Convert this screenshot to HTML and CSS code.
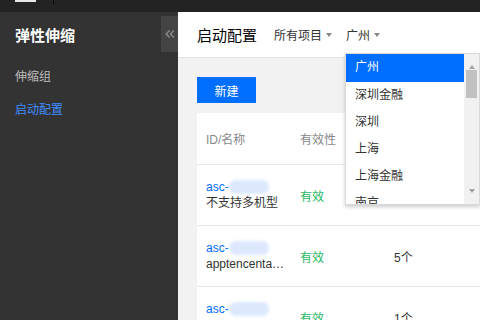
FILE: index.html
```html
<!DOCTYPE html>
<html lang="zh-CN">
<head>
    <meta charset="UTF-8">
    <meta name="viewport" content="width=device-width, initial-scale=1.0">
    <title>启动配置 - 弹性伸缩</title>
    <link rel="stylesheet" href="styles.css">
</head>

<body>
    <div class="as-topbar">
        <span class="as-logo"></span>
        <span class="as-divider"></span>
    </div>

    <div class="as-layout">
        <!-- Sidebar -->
        <aside class="as-sidebar">
            <div class="as-sidebar-title">弹性伸缩</div>
            <a class="as-nav-item">伸缩组</a>
            <a class="as-nav-item as-active">启动配置</a>
            <span class="as-collapse">
                <svg width="10" height="8" viewBox="0 0 10 8" fill="none" stroke="currentColor" stroke-width="1.4"><path d="M4.5 .5 1.2 4l3.3 3.5M8.8 .5 5.5 4l3.3 3.5"/></svg>
            </span>
        </aside>

        <main class="as-main">
            <div class="as-header">
                <h1 class="as-title">启动配置</h1>
                <span class="as-select">所有项目 <i class="as-caret"></i></span>
                <span class="as-select">广州 <i class="as-caret"></i></span>
            </div>

            <div class="as-content">
                <button class="as-btn">新建</button>

                <div class="as-card">
                    <div class="as-row as-row-head">
                        <div>ID/名称</div>
                        <div>有效性</div>
                        <div></div>
                    </div>
                    <div class="as-row">
                        <div class="as-cell-id">
                            <span class="as-link">asc-<span class="as-mask"></span></span>
                            <span class="as-name">不支持多机型</span>
                        </div>
                        <div class="as-ok">有效</div>
                        <div></div>
                    </div>
                    <div class="as-row">
                        <div class="as-cell-id">
                            <span class="as-link">asc-<span class="as-mask"></span></span>
                            <span class="as-name">apptencentautoscaling</span>
                        </div>
                        <div class="as-ok">有效</div>
                        <div>5个</div>
                    </div>
                    <div class="as-row">
                        <div class="as-cell-id">
                            <span class="as-link">asc-<span class="as-mask"></span></span>
                            <span class="as-name">default</span>
                        </div>
                        <div class="as-ok">有效</div>
                        <div>1个</div>
                    </div>
                </div>
            </div>

            <!-- Region dropdown -->
            <div class="as-dropdown">
                <ul class="as-options">
                    <li class="as-selected">广州</li>
                    <li>深圳金融</li>
                    <li>深圳</li>
                    <li>上海</li>
                    <li>上海金融</li>
                    <li>南京</li>
                    <li>北京</li>
                </ul>
                <div class="as-scrollbar">
                    <i class="as-arrow as-arrow-up"></i>
                    <span class="as-thumb"></span>
                    <i class="as-arrow as-arrow-down"></i>
                </div>
            </div>
        </main>
    </div>
</body>
</html>
```

FILE: styles.css
```css
* {
    box-sizing: border-box;
}

body {
    margin: 0;
    width: 480px;
    height: 320px;
    overflow: hidden;
    font-family: "Liberation Sans", "Noto Sans CJK SC", sans-serif;
    font-size: 12px;
    color: #333;
    background-color: #f2f2f2;
}

.as-topbar {
    height: 12px;
    background-color: #232323;
    position: relative;
}
.as-logo {
    position: absolute;
    left: 15px;
    top: 0;
    width: 21px;
    height: 2px;
    background-color: #e8e8e8;
}
.as-divider {
    position: absolute;
    left: 53px;
    top: 0;
    width: 1px;
    height: 4px;
    background-color: #000;
}

.as-layout {
    display: flex;
    height: 308px;
    overflow: hidden;
}

/* sidebar */
.as-sidebar {
    position: relative;
    width: 178px;
    flex-shrink: 0;
    background-color: #333;
    padding: 14px 0 0 15px;
    display: flex;
    flex-direction: column;
}
.as-sidebar-title {
    color: #fff;
    font-size: 15px;
    font-weight: bold;
    line-height: 20px;
    margin-bottom: 23px;
}
.as-nav-item {
    color: #bbb;
    line-height: 16px;
    margin-bottom: 17px;
}
.as-nav-item.as-active {
    color: #3d8cff;
}
.as-collapse {
    position: absolute;
    top: 4px;
    right: 0;
    width: 17px;
    height: 36px;
    background-color: #444;
    color: #8c8c8c;
    display: flex;
    align-items: center;
    justify-content: center;
}
.as-collapse svg {
    display: block;
}

/* main */
.as-main {
    position: relative;
    flex: 1;
    min-width: 0;
}

.as-header {
    height: 46px;
    background-color: #fff;
    border-bottom: 1px solid #e2e2e2;
    display: flex;
    align-items: center;
    padding-left: 19px;
}
.as-title {
    margin: 0 17px 0 0;
    font-size: 15px;
    font-weight: normal;
    color: #000;
}
.as-select {
    display: inline-flex;
    align-items: center;
    gap: 3px;
    margin-right: 14px;
    color: #333;
}
.as-caret {
    width: 0;
    height: 0;
    border-left: 3.5px solid transparent;
    border-right: 3.5px solid transparent;
    border-top: 4px solid #888;
    margin-left: 1px;
}

.as-content {
    padding: 19px 0 0 19px;
}

.as-btn {
    display: block;
    width: 59px;
    height: 26px;
    border: 0;
    padding: 0;
    background-color: #006eff;
    color: #fff;
    font-family: inherit;
    font-size: 12px;
}

.as-card {
    margin-top: 10px;
    background-color: #fff;
}

.as-row {
    display: grid;
    grid-template-columns: 94px 94px 1fr;
    align-items: center;
    height: 61px;
    padding-left: 9px;
    border-bottom: 1px solid #e7e7e7;
}
.as-row-head {
    height: 52px;
    color: #888;
}

.as-cell-id {
    display: flex;
    flex-direction: column;
    line-height: 16px;
}
.as-link {
    color: #006eff;
    display: flex;
    align-items: center;
}
.as-mask {
    display: inline-block;
    width: 40px;
    height: 14px;
    border-radius: 7px;
    background-color: #dde8ff;
    filter: blur(1.5px);
}
.as-name {
    width: 80px;
    white-space: nowrap;
    overflow: hidden;
    text-overflow: ellipsis;
}

.as-ok {
    color: #29b864;
}

/* dropdown */
.as-dropdown {
    position: absolute;
    left: 167px;
    top: 41px;
    width: 135px;
    height: 152px;
    display: flex;
    background-color: #fff;
    border: 1px solid #d9d9d9;
    box-shadow: 0 2px 4px rgba(0, 0, 0, .2);
    overflow: hidden;
    z-index: 10;
}
.as-options {
    flex: 1;
    margin: 0;
    padding: 0;
    list-style: none;
    overflow: hidden;
}
.as-options li {
    height: 27px;
    line-height: 27px;
    padding-left: 9px;
    color: #333;
}
.as-options li.as-selected {
    height: 28px;
    line-height: 27px;
    background-color: #006eff;
    color: #fff;
}

.as-scrollbar {
    width: 15px;
    flex-shrink: 0;
    background-color: #f1f1f1;
    display: flex;
    flex-direction: column;
    align-items: center;
}
.as-arrow {
    height: 15px;
    width: 0;
    border-left: 3.5px solid transparent;
    border-right: 3.5px solid transparent;
}
.as-arrow-up {
    border-top: 5px solid transparent;
    border-bottom: 4px solid #a3a3a3;
}
.as-arrow-down {
    margin-top: auto;
    border-top: 4px solid #a3a3a3;
    border-bottom: 6px solid transparent;
}
.as-thumb {
    width: 11px;
    height: 28px;
    margin-top: 1px;
    background-color: #c1c1c1;
}
```
